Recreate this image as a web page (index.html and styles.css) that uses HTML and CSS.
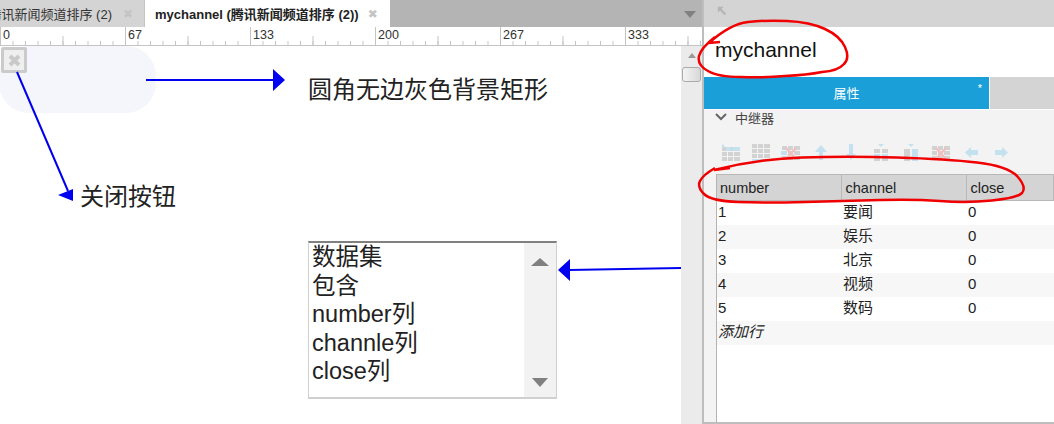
FILE: index.html
```html
<!DOCTYPE html>
<html lang="en">
<head>
  <meta charset="UTF-8">
  <meta name="viewport" content="width=device-width, initial-scale=1.0">
  <title>mychannel</title>
  <link rel="stylesheet" href="styles.css">
</head>
<body>
  <svg width="0" height="0" class="defs">
    <symbol id="grid" viewBox="0 0 18 14">
      <path d="M0 0h5v4H0zM6 0h5v4H6zM12 0h6v4h-6zM0 5h5v4H0zM6 5h5v4H6zM12 5h6v4h-6zM0 10h5v4H0zM6 10h5v4H6zM12 10h6v4h-6z"/>
    </symbol>
  </svg>

  <div class="editor">
    <div class="tabbar">
      <div class="tab tab-off"><span>腾讯新闻频道排序 (2)</span><b class="tab-x">✖</b></div>
      <div class="tab tab-on"><span>mychannel (腾讯新闻频道排序 (2))</span><b class="tab-x">✖</b></div>
      <div class="tab-menu"></div>
    </div>
    <div class="ruler">
      <span>0</span><span>67</span><span>133</span><span>200</span><span>267</span><span>333</span>
    </div>
    <div class="work">
      <div class="canvas">
        <div class="pill"></div>
        <div class="close-btn">
          <svg width="15" height="15" viewBox="0 0 15 15"><path d="M3 3l9 9M12 3l-9 9" stroke="#c9c9c9" stroke-width="4"/></svg>
        </div>
        <div class="note note-pill">圆角无边灰色背景矩形</div>
        <div class="note note-close">关闭按钮</div>
        <div class="listbox">
          <div class="listbox-text">数据集<br>包含<br>number列<br>channle列<br>close列</div>
          <div class="listbox-bar">
            <i class="up"></i>
            <i class="down"></i>
          </div>
        </div>
        <svg class="arrows" width="681" height="378" viewBox="0 46 681 378">
          <path d="M146 80H274M17 72L68 191M681 268L569 270" stroke="#0000f0" stroke-width="2" fill="none"/>
          <path d="M273 69L285 80L273 91zM58 195L73 189V201zM558 270L570 259V281z" fill="#0000f0"/>
        </svg>
      </div>
      <div class="vbar">
        <i class="vbar-up"></i>
        <div class="vbar-thumb"></div>
      </div>
    </div>
  </div>

  <div class="panel">
    <div class="panel-top">
      <svg width="10" height="10" viewBox="0 0 12 12"><path d="M1 1h7L5.500 3.500 11 9l-2 2-5.500-5.500L1 8z" fill="#b5b5b5"/></svg>
    </div>
    <div class="panel-title">mychannel</div>
    <div class="panel-tabs">
      <div class="ptab-on">属性<span class="star">*</span></div>
      <div class="ptab-off"></div>
    </div>
    <div class="section">
      <div class="section-head">
        <svg width="12" height="8" viewBox="0 0 12 8"><path d="M1 1l5 5 5-5" stroke="#666" stroke-width="2" fill="none"/></svg>
        <span>中继器</span>
      </div>
      <div class="toolbar">
        <div class="tool"><svg width="18" height="17" viewBox="0 0 18 17"><use href="#grid" y="3" width="18" height="14" class="gray"/><path d="M0 0l3 2-3 2zM4 3h5v4H4zM10 3h8v4h-8z" class="blue"/></svg></div>
        <div class="tool"><svg width="18" height="17" viewBox="0 0 18 17"><use href="#grid" width="18" height="14" class="gray"/><path d="M0 15h18v2H0z" class="blue"/></svg></div>
        <div class="tool"><svg width="20" height="17" viewBox="0 0 20 17"><use href="#grid" y="2" width="20" height="14" class="gray"/><path d="M0 7h6v4H0z" class="blue"/><path d="M5 4l10 11M15 4L5 15" class="red"/></svg></div>
        <div class="tool"><svg width="12" height="17" viewBox="0 0 12 17"><path d="M6 1l6 7H8v8H4V8H0z" class="blue"/></svg></div>
        <div class="tool"><svg width="12" height="17" viewBox="0 0 12 17"><path d="M4 0h4v10h3l-5 6-5-6h3z" class="blue"/></svg></div>
        <div class="tool"><svg width="14" height="17" viewBox="0 0 14 17"><path d="M0 5h6v4H0zM8 5h6v4H8z" class="gray"/><path d="M4 0h6L7 3zM0 10h6v3H0zM8 10h6v3H8z" class="blue"/><path d="M0 14h6v3H0zM8 14h6v3H8z" class="gray"/></svg></div>
        <div class="tool"><svg width="14" height="17" viewBox="0 0 14 17"><path d="M0 5h6v12H0z" class="gray"/><path d="M4 0h6L7 3zM8 5h6v12H8z" class="blue"/></svg></div>
        <div class="tool"><svg width="20" height="17" viewBox="0 0 20 17"><use href="#grid" y="2" width="20" height="14" class="gray"/><path d="M5 4l10 11M15 4L5 15" class="red"/></svg></div>
        <div class="tool"><svg width="13" height="13" viewBox="0 0 13 13"><path d="M0 6.500L6 1v3h7v5H6v3z" class="blue"/></svg></div>
        <div class="tool"><svg width="13" height="13" viewBox="0 0 13 13"><path d="M13 6.500L7 1v3H0v5h7v3z" class="blue"/></svg></div>
      </div>
    </div>
    <div class="table-wrap">
      <table class="data">
        <thead>
          <tr><th>number</th><th>channel</th><th>close</th></tr>
        </thead>
        <tbody>
          <tr><td>1</td><td>要闻</td><td>0</td></tr>
          <tr><td>2</td><td>娱乐</td><td>0</td></tr>
          <tr><td>3</td><td>北京</td><td>0</td></tr>
          <tr><td>4</td><td>视频</td><td>0</td></tr>
          <tr><td>5</td><td>数码</td><td>0</td></tr>
          <tr><td colspan="3" class="add-row">添加行</td></tr>
        </tbody>
      </table>
    </div>
  </div>

  <!-- hand drawn marks on top of the screenshot -->
  <svg class="marks" width="1054" height="424" viewBox="0 0 1054 424">
    <path d="M720 42L709 43Q730 24 748 22Q767 20 787 21Q810 22 825 29Q840 36 845 47Q850 58 844 64Q838 71 822 72Q807 75 785 76Q763 78 741 77Q718 77 708 71Q697 65 699 56Q701 48 715 37"/>
    <path d="M730 168L714 170Q757 159 802 157.500Q847 156 897 157.500Q947 159 977 162.500Q1007 166 1017 176Q1027 187 1022 193Q1017 198 992 200.500Q967 203 940 201Q913 199 880 200Q847 201 805 202Q763 203 738 202Q711 201 704 194Q697 187 700 181Q703 175 715 168"/>
  </svg>
</body>
</html>
```

FILE: styles.css
```css
* {
  box-sizing: border-box;
}
html, body {
  height: 100%;
}
body {
  display: flex;
  margin: 0;
  width: 1054px;
  height: 424px;
  overflow: hidden;
  position: relative;
  background: #fff;
  color: #222;
  font-family: "Liberation Sans", "Noto Sans CJK SC", sans-serif;
}
.defs {
  position: absolute;
}

/* left side */
.editor {
  display: flex;
  flex-direction: column;
  width: 702px;
  flex: none;
}
.tabbar {
  display: flex;
  height: 27px;
  background: #b4b4b4;
  font-size: 13px;
}
.tab {
  display: flex;
  align-items: center;
  flex: none;
  white-space: nowrap;
  overflow: hidden;
}
.tab-off {
  width: 145px;
  justify-content: flex-end;
  padding-right: 9px;
  background: #d4d4d4;
  border-right: 1px solid #c4c4c4;
  color: #333;
}
.tab-on {
  width: 245px;
  padding-left: 10px;
  background: #fff;
  color: #222;
  font-weight: bold;
}
.tab-x {
  flex: none;
  width: 12px;
  margin-left: 11px;
  color: #c4c4c4;
  font-size: 12px;
  font-weight: normal;
  font-family: "DejaVu Sans", sans-serif;
}
.tab-on .tab-x {
  margin-left: 9px;
}
.tab-menu {
  width: 0;
  height: 0;
  margin: 11px 6px 0 auto;
  border-style: solid;
  border-width: 7px 6px 0;
  border-color: #808080 transparent transparent;
}
.ruler {
  display: flex;
  height: 19px;
  padding-left: 1px;
  overflow: hidden;
  font-size: 12.500px;
  color: #333;
  background-color: #fff;
  background-image:
    linear-gradient(#c4c4c4, #c4c4c4),
    linear-gradient(to right, #c4c4c4 1px, transparent 1px),
    linear-gradient(to right, #c4c4c4 1px, transparent 1px),
    linear-gradient(to right, #c4c4c4 1px, transparent 1px);
  background-repeat: no-repeat, repeat-x, repeat-x, repeat-x;
  background-size: 100% 1px, 125px 100%, 62.5px 10px, 12.5px 5px;
  background-position: 0 100%, 0 0, 0 100%, 0 100%;
}
.ruler span {
  width: 125px;
  flex: none;
  padding: 1px 0 0 2px;
  line-height: 14px;
}
.work {
  display: flex;
  flex: 1;
  min-height: 0;
}
.canvas {
  flex: 1;
  position: relative;
}
.vbar {
  width: 21px;
  flex: none;
  background: #ebebeb;
  padding-top: 7px;
}
.vbar-up {
  display: block;
  width: 0;
  height: 0;
  margin: 0 auto;
  border-style: solid;
  border-width: 0 4px 5px;
  border-color: transparent transparent #999;
}
.vbar-thumb {
  width: 19px;
  height: 15px;
  margin: 9px 0 0 1px;
  border: 1px solid #aaa;
  border-radius: 3px;
  background: linear-gradient(to right, #f4f4f4, #d8d8d8);
}

/* things on the canvas */
.pill {
  position: absolute;
  left: -1px;
  top: 0;
  width: 157px;
  height: 67px;
  border-radius: 30px;
  background: #f4f6fb;
}
.close-btn {
  position: absolute;
  left: 1px;
  top: 1px;
  width: 26px;
  height: 26px;
  display: flex;
  align-items: center;
  justify-content: center;
  border: 3px solid #cbcbcb;
  border-radius: 2px;
  background: #efefef;
}
.note {
  position: absolute;
  font-size: 24px;
  line-height: 30px;
  white-space: nowrap;
}
.note-pill {
  left: 308px;
  top: 29px;
}
.note-close {
  left: 80px;
  top: 136px;
}
.listbox {
  position: absolute;
  left: 308px;
  top: 195px;
  width: 249px;
  height: 158px;
  display: flex;
  border: 1px solid #d0d0d0;
  border-top: 2px solid #808080;
  border-bottom-width: 2px;
}
.listbox-text {
  flex: 1;
  padding: 0 0 0 3px;
  font-size: 23.500px;
  line-height: 28.500px;
}
.listbox-bar {
  width: 32px;
  flex: none;
  display: flex;
  flex-direction: column;
  justify-content: space-between;
  align-items: center;
  padding: 15px 0 10px;
  background: #f2f2f2;
}
.listbox-bar i {
  width: 0;
  height: 0;
  border-style: solid;
  border-color: transparent;
}
.listbox-bar .up {
  border-width: 0 9px 8px;
  border-bottom-color: #808080;
}
.listbox-bar .down {
  border-width: 9px 8px 0;
  border-top-color: #808080;
}
.arrows {
  position: absolute;
  left: 0;
  top: 0;
}

/* right panel */
.panel {
  flex: 1;
  display: flex;
  flex-direction: column;
  border-left: 2px solid #bdbdbd;
  border-bottom: 2px solid #bdbdbd;
  background: #f3f3f3;
}
.panel-top {
  height: 27px;
  flex: none;
  padding: 6px 0 0 13px;
  background: #d4d4d4;
}
.panel-top svg {
  display: block;
}
.panel-title {
  height: 50px;
  flex: none;
  padding: 9px 0 0 11px;
  background: #fff;
  color: #111;
  font-size: 21px;
  line-height: 28px;
}
.panel-tabs {
  display: flex;
  height: 33px;
  flex: none;
  border-bottom: 1px solid #fff;
}
.ptab-on {
  width: 286px;
  position: relative;
  text-align: center;
  line-height: 33px;
  font-size: 13px;
  color: #fff;
  background: #1a9fd9;
  border-right: 1px solid #fff;
}
.star {
  position: absolute;
  right: 7px;
  top: -5px;
  font-size: 11px;
}
.ptab-off {
  flex: 1;
  background: #d4d4d4;
}
.section {
  height: 64px;
  flex: none;
}
.section-head {
  display: flex;
  align-items: center;
  gap: 8px;
  height: 14px;
  padding-left: 11px;
  font-size: 13px;
  color: #444;
}
.toolbar {
  display: flex;
  padding: 20px 0 0 12px;
}
.tool {
  width: 30px;
  height: 17px;
  display: flex;
  align-items: center;
  justify-content: center;
}
.tool svg {
  display: block;
}
.gray {
  fill: #d2d2d2;
}
.blue {
  fill: #c4e1f0;
}
.red {
  fill: none;
  stroke: #f5bcbc;
  stroke-width: 2;
}
.table-wrap {
  flex: 1;
  min-height: 0;
  margin-left: 12px;
  background: #fff;
  border-left: 1px solid #b4b4b4;
}
.data {
  width: 100%;
  table-layout: fixed;
  border-collapse: collapse;
  font-size: 15px;
  color: #222;
}
.data th {
  height: 26px;
  padding: 0 0 0 3px;
  text-align: left;
  font-weight: normal;
  font-size: 14.500px;
  background: #d4d4d4;
  border: 1px solid #b8b8b8;
  border-left-width: 0;
}
.data th:nth-child(1), .data td:nth-child(1) {
  width: 124px;
}
.data th:nth-child(2), .data td:nth-child(2) {
  width: 125px;
  padding-left: 2px;
}
.data th:nth-child(2), .data th:nth-child(3) {
  padding-left: 4px;
}
.data td {
  height: 24px;
  padding: 0 0 2px 1px;
  line-height: 20px;
}
.data td:nth-child(3) {
  padding-left: 2px;
}
.data tbody tr:nth-child(even) {
  background: #f7f7f7;
}
.add-row {
  font-style: italic;
}

/* red pen marks */
.marks {
  position: absolute;
  left: 0;
  top: 0;
  pointer-events: none;
}
.marks path {
  fill: none;
  stroke: #f00000;
  stroke-width: 2.500;
}
```
